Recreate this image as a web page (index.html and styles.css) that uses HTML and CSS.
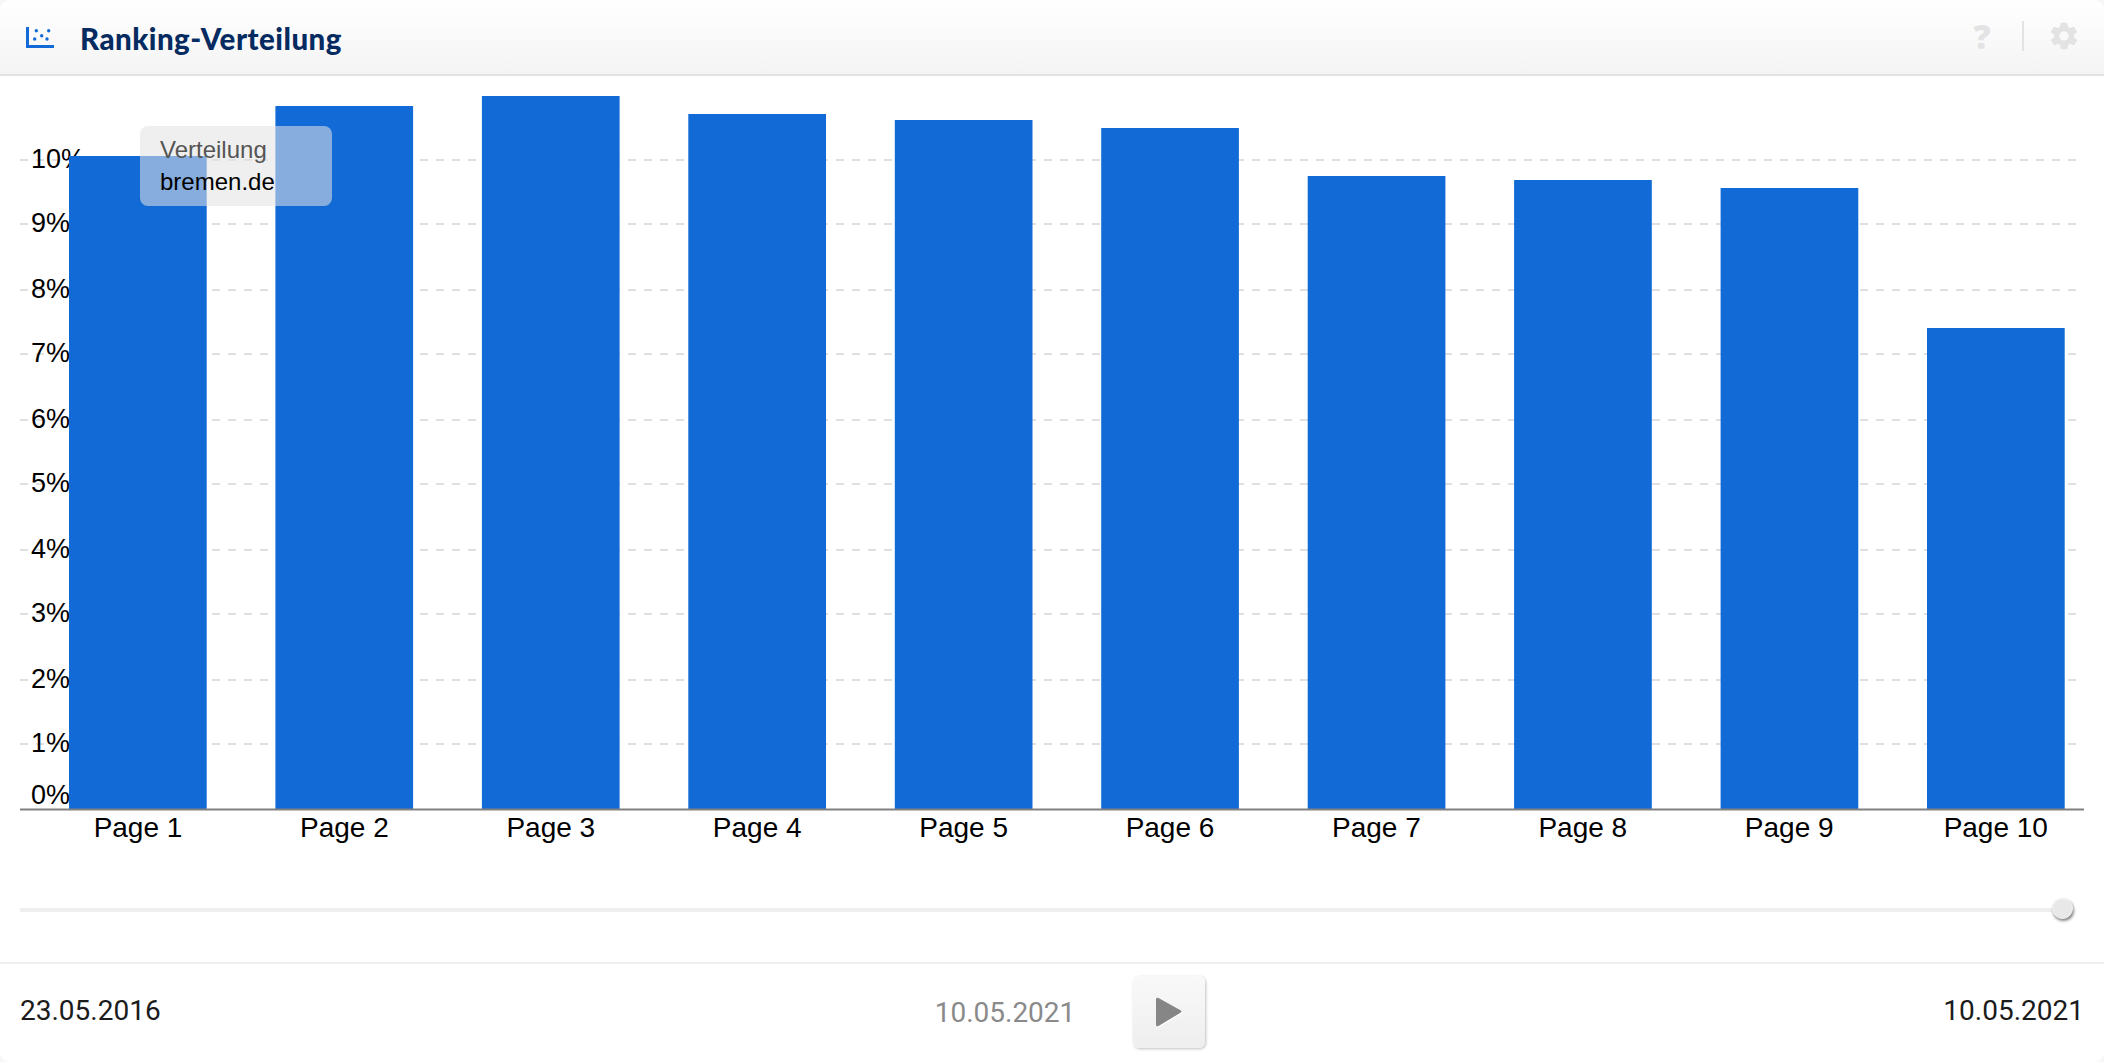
FILE: index.html
```html
<!DOCTYPE html>
<html lang="de">
<head>
<meta charset="utf-8">
<title>Ranking-Verteilung</title>
<link rel="stylesheet" href="styles.css">
</head>
<body>
<main class="card">
  <header class="head">
    <svg class="head-icon" viewBox="0 0 28 21" width="28" height="21" aria-hidden="true">
      <path class="ico-blue" d="M0 0h3v18h25v3H0z"/>
      <g class="ico-blue">
        <circle cx="10.300" cy="3.700" r="1.700"/><circle cx="22.700" cy="3.700" r="1.700"/><circle cx="15.700" cy="8.700" r="1.700"/><circle cx="8.700" cy="12" r="1.700"/><circle cx="21" cy="12" r="1.700"/>
      </g>
    </svg>
    <h1 class="title">Ranking-Verteilung</h1>
    <div class="tools">
      <span class="help">?</span>
      <span class="divider"></span>
      <svg class="gear" viewBox="0 0 24 24" width="32" height="32" aria-hidden="true">
        <path d="M19.4 13a7.600 7.600 0 0 0 0-2l2.100-1.600a.5.5 0 0 0 .1-.7l-2-3.400a.5.5 0 0 0-.6-.2l-2.500 1a7.300 7.300 0 0 0-1.700-1l-.4-2.700a.5.5 0 0 0-.5-.4h-4a.5.5 0 0 0-.5.4l-.4 2.700a7.300 7.300 0 0 0-1.700 1l-2.500-1a.5.5 0 0 0-.6.2l-2 3.400a.5.5 0 0 0 .1.7L4.600 11a7.600 7.600 0 0 0 0 2l-2.100 1.600a.5.5 0 0 0-.1.7l2 3.400c.1.2.4.3.6.2l2.500-1c.5.4 1.100.7 1.700 1l.4 2.700c0 .2.2.4.5.4h4c.3 0 .5-.2.5-.4l.4-2.700c.6-.3 1.200-.6 1.700-1l2.500 1c.2.1.5 0 .6-.2l2-3.400a.5.5 0 0 0-.1-.7zM12 15.500a3.500 3.500 0 1 1 0-7 3.500 3.500 0 0 1 0 7z"/>
      </svg>
    </div>
  </header>

  <section class="chart">
    <svg class="plot" viewBox="0 0 2104 832" width="2104" height="832" role="img" aria-label="Ranking-Verteilung">
      <path class="grid" d="M20 84H2084M20 148H2084M20 214H2084M20 278H2084M20 344H2084M20 408H2084M20 474H2084M20 538H2084M20 604H2084M20 668H2084"/>
      <g class="ylabels">
        <text x="31" y="92">10%</text><text x="31" y="156">9%</text><text x="31" y="222">8%</text><text x="31" y="286">7%</text><text x="31" y="352">6%</text><text x="31" y="416">5%</text><text x="31" y="482">4%</text><text x="31" y="546">3%</text><text x="31" y="612">2%</text><text x="31" y="676">1%</text><text x="31" y="728">0%</text>
      </g>
      <g class="bars">
        <rect x="69" y="80" width="137.700" height="653"/>
        <rect x="275.400" y="30" width="137.700" height="703"/>
        <rect x="481.900" y="20" width="137.700" height="713"/>
        <rect x="688.300" y="38" width="137.700" height="695"/>
        <rect x="894.800" y="44" width="137.700" height="689"/>
        <rect x="1101.200" y="52" width="137.700" height="681"/>
        <rect x="1307.700" y="100" width="137.700" height="633"/>
        <rect x="1514.100" y="104" width="137.700" height="629"/>
        <rect x="1720.600" y="112" width="137.700" height="621"/>
        <rect x="1927" y="252" width="137.700" height="481"/>
      </g>
      <path class="axis" d="M20 733.500H2084"/>
      <g class="xlabels">
        <text x="138" y="761">Page 1</text><text x="344.400" y="761">Page 2</text><text x="550.800" y="761">Page 3</text><text x="757.200" y="761">Page 4</text><text x="963.600" y="761">Page 5</text><text x="1170" y="761">Page 6</text><text x="1376.400" y="761">Page 7</text><text x="1582.800" y="761">Page 8</text><text x="1789.200" y="761">Page 9</text><text x="1995.800" y="761">Page 10</text>
      </g>
    </svg>
    <div class="tooltip">
      <div class="tip-label">Verteilung</div>
      <div class="tip-value">bremen.de</div>
    </div>
  </section>

  <div class="slider"><span class="knob"></span></div>

  <footer class="foot">
    <span class="date">23.05.2016</span>
    <div class="current">
      <span class="date date-muted">10.05.2021</span>
      <button class="play" type="button" aria-label="Play">
        <svg viewBox="0 0 26 30" width="26" height="30" aria-hidden="true"><path d="M2.500 1 24.500 13.200c1.200.7 1.200 1.900 0 2.600L2.500 29C1.200 29.700 0 29 0 27.500V2.500C0 1 1.200.3 2.500 1z"/></svg>
      </button>
    </div>
    <span class="date">10.05.2021</span>
  </footer>
</main>
</body>
</html>
```
FILE: styles.css
```css
* { box-sizing: border-box; }
html, body { margin: 0; height: 100%; background: #f6f6f6; }
.card { width: 2104px; height: 1062px; display: flex; flex-direction: column; overflow: hidden; border-radius: 10px; background: #fff; }
.head { height: 76px; flex: none; display: flex; align-items: center; padding-left: 26px; border-bottom: 2px solid #e3e3e3; background: linear-gradient(#fff, #f4f4f4); }
.head-icon { flex: none; margin-top: 1px; }
.ico-blue { fill: #126ad6; }
.title { margin: 3px 0 0 26px; font: 900 29.5px Lato, sans-serif; letter-spacing: .48px; color: #062b60; }
.tools { margin-left: auto; display: flex; align-items: center; padding-right: 24px; margin-top: -3px; }
.help { font: 800 34px/1 "Open Sans", sans-serif; color: #e3e3e3; width: 20px; text-align: center; }
.divider { width: 2px; height: 30px; margin: 0 24px 0 30px; background: #e3e3e3; }
.gear { fill: #e3e3e3; flex: none; display: block; }
.chart { position: relative; height: 832px; flex: none; }
.plot { display: block; }
.grid { stroke: #e0e0e0; stroke-width: 2; stroke-dasharray: 8 8; fill: none; }
.bars rect { fill: #126ad6; }
.axis { stroke: #808080; stroke-width: 2; fill: none; }
.ylabels text { font: 27px "Liberation Sans", sans-serif; fill: #000; }
.xlabels text { font: 28px "Liberation Sans", sans-serif; fill: #000; text-anchor: middle; }
.tooltip { position: absolute; left: 140px; top: 50px; width: 192px; height: 80px; padding: 8px 20px; border-radius: 8px; background: rgba(226,226,226,.56); font: 24px/32px "Liberation Sans", sans-serif; }
.tip-label { color: #555; }
.tip-value { color: #000; }
.slider { position: relative; height: 4px; margin: 0 31px 0 20px; background: #eee; flex: none; }
.knob { position: absolute; right: 0; top: -10px; width: 21px; height: 21px; border-radius: 50%; background: #e8e8e8; border: 1px solid #f6f6f6; box-shadow: 1px 2px 3px rgba(0,0,0,.5); }
.foot { flex: 1; margin-top: 50px; border-top: 2px solid #eee; display: flex; align-items: center; justify-content: space-between; padding: 0 20px 6px; }
.date { font: 28px Roboto, sans-serif; color: #1b1b1b; }
.date-muted { color: #8a8a8a; }
.current { display: flex; align-items: center; gap: 58px; margin-left: 36px; margin-top: 4px; }
.play { width: 72px; height: 72px; padding: 0; border: 0; border-radius: 6px; background: linear-gradient(#f9f9f9, #eee); box-shadow: 1px 1px 3px rgba(0,0,0,.25); display: flex; align-items: center; justify-content: center; }
.play svg { filter: drop-shadow(1px 1px 0 #fff); }
.play path { fill: #868686; }
```
